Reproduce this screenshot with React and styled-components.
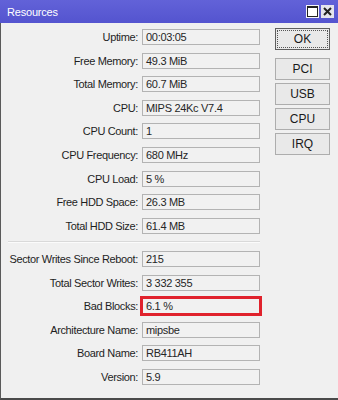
import React from 'react';
import styled, { createGlobalStyle } from 'styled-components';

const GlobalStyle = createGlobalStyle`
  body {
    margin: 0;
    background: #f0f0f0;
    font-family: "Liberation Sans", Arial, sans-serif;
  }
`;

const Window = styled.div`
  width: 338px;
  height: 400px;
  display: flex;
  flex-direction: column;
  background: #f0f0f0;
  overflow: hidden;
`;

const TitleBar = styled.div`
  height: 23px;
  flex-shrink: 0;
  display: flex;
  align-items: center;
  justify-content: space-between;
  padding: 0 4px 0 7px;
  background: linear-gradient(#6262d8, #5454cf);
  color: #fff;
  font-size: 11px;
  letter-spacing: -0.2px;
`;

const TitleButtons = styled.div`
  display: flex;
  gap: 2px;
`;

const TitleButton = styled.div`
  width: 13px;
  height: 13px;
  display: flex;
  align-items: center;
  justify-content: center;
  background: ${(p) => (p.close ? '#e4e4ec' : '#f4f4f8')};
`;

const Body = styled.div`
  flex: 1;
  display: flex;
  align-items: flex-start;
  padding-top: 6px;
  border-left: 1px solid #5a5a5a;
  border-bottom: 2px solid #4a4a4a;
`;

const Form = styled.div`
  display: grid;
  grid-template-columns: 137px 118px;
  grid-template-rows: repeat(9, 16px) 2px repeat(6, 16px);
  column-gap: 4px;
  row-gap: 7.6px;
`;

const Label = styled.div`
  text-align: right;
  font-size: 11px;
  letter-spacing: -0.35px;
  line-height: 16px;
  color: #1e1e1e;
  white-space: nowrap;
`;

const Field = styled.div`
  box-sizing: border-box;
  height: 16px;
  padding-left: 3px;
  font-size: 11px;
  letter-spacing: -0.3px;
  line-height: 14px;
  color: #262626;
  background: #f1f1f1;
  border: 1px solid ${(p) => (p.highlight ? '#e0222c' : '#b3b3b3')};
  box-shadow: ${(p) => (p.highlight ? '0 0 0 2px #e0222c' : 'none')};
  white-space: nowrap;
`;

const Separator = styled.div`
  grid-column: 1 / -1;
  height: 1px;
  margin-left: 7px;
  background: #d9d9d9;
  border-bottom: 1px solid #fbfbfb;
`;

const ButtonColumn = styled.div`
  display: flex;
  flex-direction: column;
  gap: 3px;
  margin: -1px 0 0 15px;
`;

const Button = styled.div`
  box-sizing: border-box;
  width: 55px;
  height: 22px;
  display: flex;
  align-items: center;
  justify-content: center;
  margin-bottom: ${(p) => (p.primary ? '5px' : '0')};
  font-size: 12px;
  color: #1a1a1a;
  background: #e9e9e9;
  border: 1px solid ${(p) => (p.primary ? '#5e5e5e' : '#adadad')};
  outline: ${(p) => (p.primary ? '1px dotted #555' : 'none')};
  outline-offset: -3px;
`;

const topRows = [
  ['Uptime', '00:03:05'],
  ['Free Memory', '49.3 MiB'],
  ['Total Memory', '60.7 MiB'],
  ['CPU', 'MIPS 24Kc V7.4'],
  ['CPU Count', '1'],
  ['CPU Frequency', '680 MHz'],
  ['CPU Load', '5 %'],
  ['Free HDD Space', '26.3 MB'],
  ['Total HDD Size', '61.4 MB'],
];

const bottomRows = [
  ['Sector Writes Since Reboot', '215'],
  ['Total Sector Writes', '3 332 355'],
  ['Bad Blocks', '6.1 %', true],
  ['Architecture Name', 'mipsbe'],
  ['Board Name', 'RB411AH'],
  ['Version', '5.9'],
];

const renderRows = (rows) =>
  rows.map(([label, value, highlight]) => (
    <React.Fragment key={label}>
      <Label>{label}:</Label>
      <Field highlight={highlight}>{value}</Field>
    </React.Fragment>
  ));

const App = () => {
  return (
    <Window>
      <GlobalStyle />
      <TitleBar>
        <span>Resources</span>
        <TitleButtons>
          <TitleButton>
            <svg width="11" height="11" viewBox="0 0 11 11">
              <rect x="0.5" y="0.5" width="10" height="10" fill="#fff" stroke="#222" />
              <line x1="0" y1="1.5" x2="11" y2="1.5" stroke="#222" />
            </svg>
          </TitleButton>
          <TitleButton close>
            <svg width="9" height="9" viewBox="0 0 9 9">
              <path d="M1 1 L8 8 M8 1 L1 8" stroke="#222" strokeWidth="2" />
            </svg>
          </TitleButton>
        </TitleButtons>
      </TitleBar>
      <Body>
        <Form>
          {renderRows(topRows)}
          <Separator />
          {renderRows(bottomRows)}
        </Form>
        <ButtonColumn>
          <Button primary>OK</Button>
          <Button>PCI</Button>
          <Button>USB</Button>
          <Button>CPU</Button>
          <Button>IRQ</Button>
        </ButtonColumn>
      </Body>
    </Window>
  );
};

export default App;
